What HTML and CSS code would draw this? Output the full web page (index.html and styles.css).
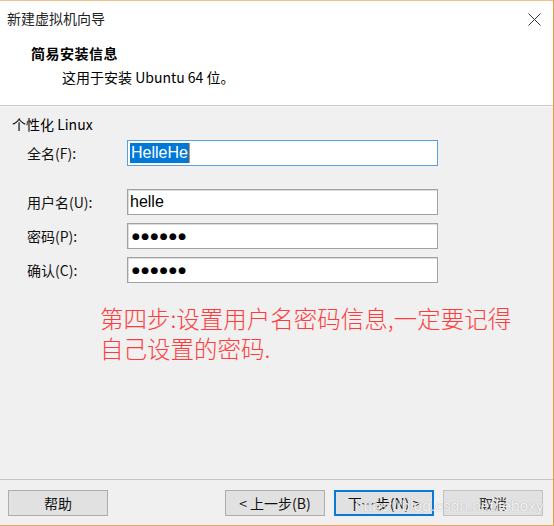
FILE: index.html
```html
<!DOCTYPE html>
<html lang="zh-CN">
<head>
<meta charset="utf-8">
<title>新建虚拟机向导</title>
<link rel="stylesheet" href="styles.css">
</head>
<body>
<div class="window">
  <div class="top">
    <div class="titlebar">
      <span class="title">新建虚拟机向导</span>
      <svg class="close" width="13" height="13" viewBox="0 0 13 13">
        <path d="M0.5 0.5 L12.5 12.5 M12.5 0.5 L0.5 12.5" stroke="#333" stroke-width="1" fill="none"/>
      </svg>
    </div>
    <div class="header">
      <div class="h-title">简易安装信息</div>
      <div class="h-sub">这用于安装 Ubuntu 64 位。</div>
    </div>
  </div>
  <div class="content">
    <div class="group">个性化 Linux</div>
    <div class="form">
      <div class="row row-first">
        <span class="label">全名(F):</span>
        <div class="input focused"><span class="sel">HelleHe</span><span class="caret"></span></div>
      </div>
      <div class="row">
        <span class="label">用户名(U):</span>
        <div class="input">helle</div>
      </div>
      <div class="row">
        <span class="label">密码(P):</span>
        <div class="input dots">●●●●●●</div>
      </div>
      <div class="row">
        <span class="label">确认(C):</span>
        <div class="input dots">●●●●●●</div>
      </div>
    </div>
    <div class="note">
      <div class="note-line">第四步:设置用户名密码信息,一定要记得</div>
      <div class="note-line">自己设置的密码.</div>
    </div>
  </div>
  <div class="footer">
    <div class="btn">帮助</div>
    <div class="spacer"></div>
    <div class="btn">&lt; 上一步(B)</div>
    <div class="btn primary">下一步(N) &gt;</div>
    <div class="btn light">取消</div>
  </div>
  <div class="watermark">https://blog.csdn.net/teboxy</div>
</div>
</body>
</html>
```
FILE: styles.css
```css
html, body {
  margin: 0;
  padding: 0;
}
body {
  width: 554px;
  height: 526px;
  background: #f0f0f0;
  font-family: "Noto Sans CJK SC", "Liberation Sans", sans-serif;
  font-size: 13.5px;
  color: #000;
  overflow: hidden;
}
.window {
  position: relative;
  box-sizing: border-box;
  width: 554px;
  height: 526px;
  border-top: 1px solid #f3c08c;
  border-right: 1px solid #f39a3a;
  border-bottom: 1px solid #f0a257;
  display: flex;
  flex-direction: column;
  background: #f0f0f0;
}
.top {
  background: #fff;
  height: 104px;
  border-bottom: 1px solid #c9c9c9;
  box-shadow: 0 1px 0 #f6f6f6;
}
.titlebar {
  height: 34px;
  display: flex;
  align-items: center;
  justify-content: space-between;
  padding-left: 7px;
  padding-right: 12px;
}
.title {
  font-size: 14px;
  line-height: 20px;
  color: #222;
  margin-top: -1px;
}
.close {
  display: block;
  margin-top: 3px;
}
.header {
  padding-top: 6px;
}
.h-title {
  padding-left: 31px;
  font-weight: bold;
  font-size: 14px;
  line-height: 24px;
  letter-spacing: 0.5px;
}
.h-sub {
  padding-left: 62px;
  font-size: 14px;
  line-height: 24px;
}
.content {
  flex: 1;
  padding-top: 8px;
  position: relative;
}
.group {
  padding-left: 12px;
  font-size: 14px;
  line-height: 20px;
}
.form {
  margin-top: 6px;
  display: flex;
  flex-direction: column;
  gap: 8px;
}
.row {
  display: flex;
  align-items: center;
}
.row-first {
  margin-bottom: 15px;
}
.label {
  width: 100px;
  padding-left: 27px;
  font-size: 14px;
  color: #111;
}
.input {
  box-sizing: border-box;
  width: 311px;
  height: 26px;
  background: #fff;
  border: 1px solid #a2a2a2;
  box-shadow: inset 1px 1px 0 #dcdcdc;
  font-family: "Liberation Sans", "Noto Sans CJK SC", sans-serif;
  font-size: 16px;
  line-height: 24px;
  padding-left: 2px;
  display: flex;
  align-items: center;
}
.input.focused {
  border-color: #5aa0e0;
  box-shadow: none;
}
.sel {
  background: #0078d7;
  color: #fff;
  line-height: 20px;
  padding: 0 1px;
}
.caret {
  display: inline-block;
  width: 1px;
  height: 20px;
  background: #e09050;
}
.dots {
  font-family: "DejaVu Sans", sans-serif;
  font-size: 9px;
  letter-spacing: 1.4px;
  padding-left: 4px;
}
.note {
  margin-top: 20px;
  padding-left: 100px;
  color: #ff3c3c;
  font-size: 23.5px;
  font-family: "Noto Sans CJK SC", sans-serif;
  font-weight: 300;
}
.note-line {
  height: 30px;
  line-height: 30px;
  white-space: nowrap;
}
.footer {
  height: 46px;
  box-sizing: border-box;
  border-top: 1px solid #c6c6c6;
  padding: 10px 10px 0 8px;
  display: flex;
  gap: 9px;
}
.spacer {
  flex: 1;
}
.btn {
  box-sizing: border-box;
  width: 100px;
  height: 26px;
  background: #e1e1e1;
  border: 1px solid #adadad;
  display: flex;
  align-items: center;
  justify-content: center;
  font-size: 14px;
  color: #111;
}
.btn.primary {
  border: 2px solid #0a78d7;
}
.btn.light {
  border-color: #c2c2c2;
  color: #333;
}
.watermark {
  position: absolute;
  left: 355px;
  top: 496px;
  font-family: "Liberation Sans", sans-serif;
  font-size: 15.5px;
  color: rgba(255, 255, 255, 0.85);
  text-shadow: 0 0 1px rgba(80, 80, 80, 0.45);
  pointer-events: none;
  white-space: nowrap;
}
```
